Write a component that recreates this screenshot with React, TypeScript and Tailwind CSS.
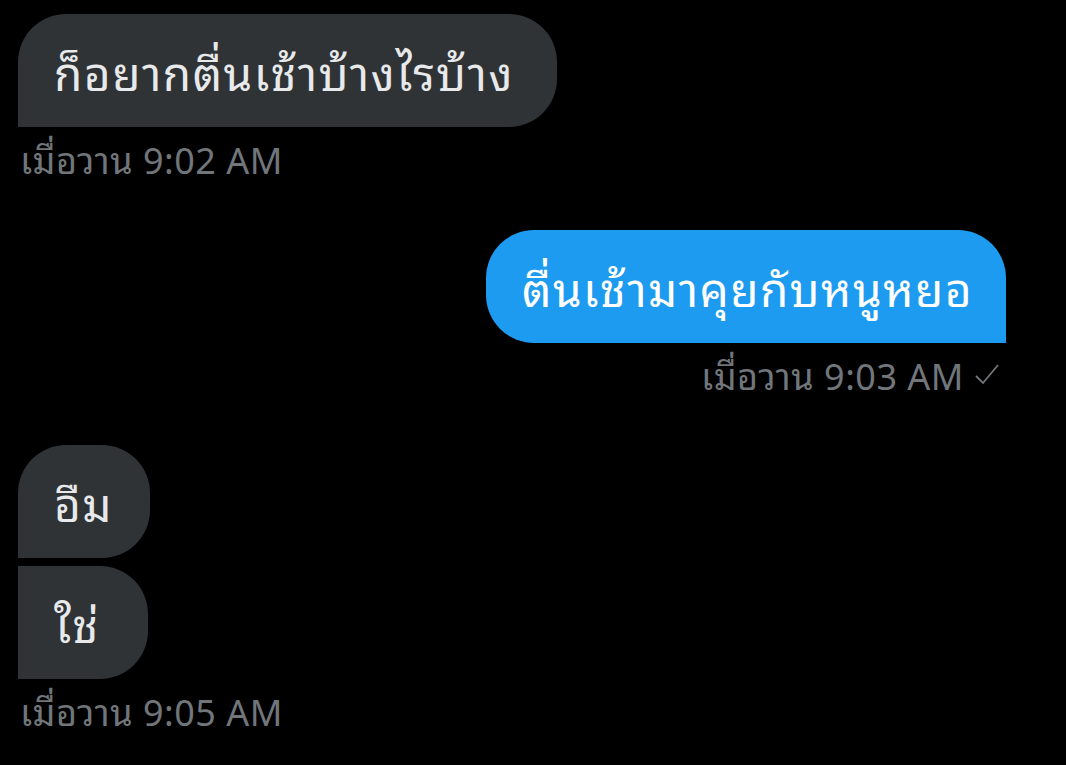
const gray = "bg-[#2f3336] text-[#e7e9ea]";

const Bubble = ({ text, mine, shape }: { text: string; mine?: boolean; shape: string }) => (
  <div
    className={`h-[113px] flex items-center px-[36px] text-[46px] tracking-[1.5px] leading-none whitespace-nowrap ${shape} ${
      mine ? "bg-[#1d9bf0] text-white" : gray
    }`}
  >
    <span className="-mt-[2px]">{text}</span>
  </div>
);

const Stamp = ({ time, check }: { time: string; check?: boolean }) => (
  <div className="flex items-center gap-[10px] text-[36px] tracking-[0.5px] leading-none text-[#71767b] whitespace-nowrap">
    <span>เมื่อวาน {time}</span>
    {check && (
      <svg width="26" height="24" viewBox="0 0 26 24" fill="none">
        <path d="M2 14 L9 21 L24 3" stroke="#71767b" strokeWidth="1.8" />
      </svg>
    )}
  </div>
);

export default function App() {
  return (
    <div
      className="w-[1066px] h-[765px] bg-black overflow-hidden flex flex-col px-[18px] pt-[14px]"
      style={{ fontFamily: '"Noto Sans Thai Looped", "Loma", "Garuda", "Norasi", "Noto Sans", "Noto Sans Thai", sans-serif' }}
    >
      <div className="flex flex-col items-start">
        <Bubble text="ก็อยากตื่นเช้าบ้างไรบ้าง" shape="rounded-[48px] rounded-bl-none w-[539px]" />
        <div className="mt-[13px] ml-[2px]">
          <Stamp time="9:02 AM" />
        </div>
      </div>

      <div className="flex flex-col items-end mt-[54px] pr-[42px]">
        <Bubble text="ตื่นเช้ามาคุยกับหนูหยอ" mine shape="rounded-[48px] rounded-br-none w-[520px]" />
        <div className="mt-[13px] mr-[6px]">
          <Stamp time="9:03 AM" check />
        </div>
      </div>

      <div className="flex flex-col items-start mt-[53px] gap-[8px]">
        <Bubble text="อืม" shape="rounded-[48px] rounded-bl-none w-[132px]" />
        <Bubble text="ใช่" shape="rounded-r-[48px] w-[130px]" />
        <div className="mt-[5px] ml-[2px]">
          <Stamp time="9:05 AM" />
        </div>
      </div>
    </div>
  );
}
